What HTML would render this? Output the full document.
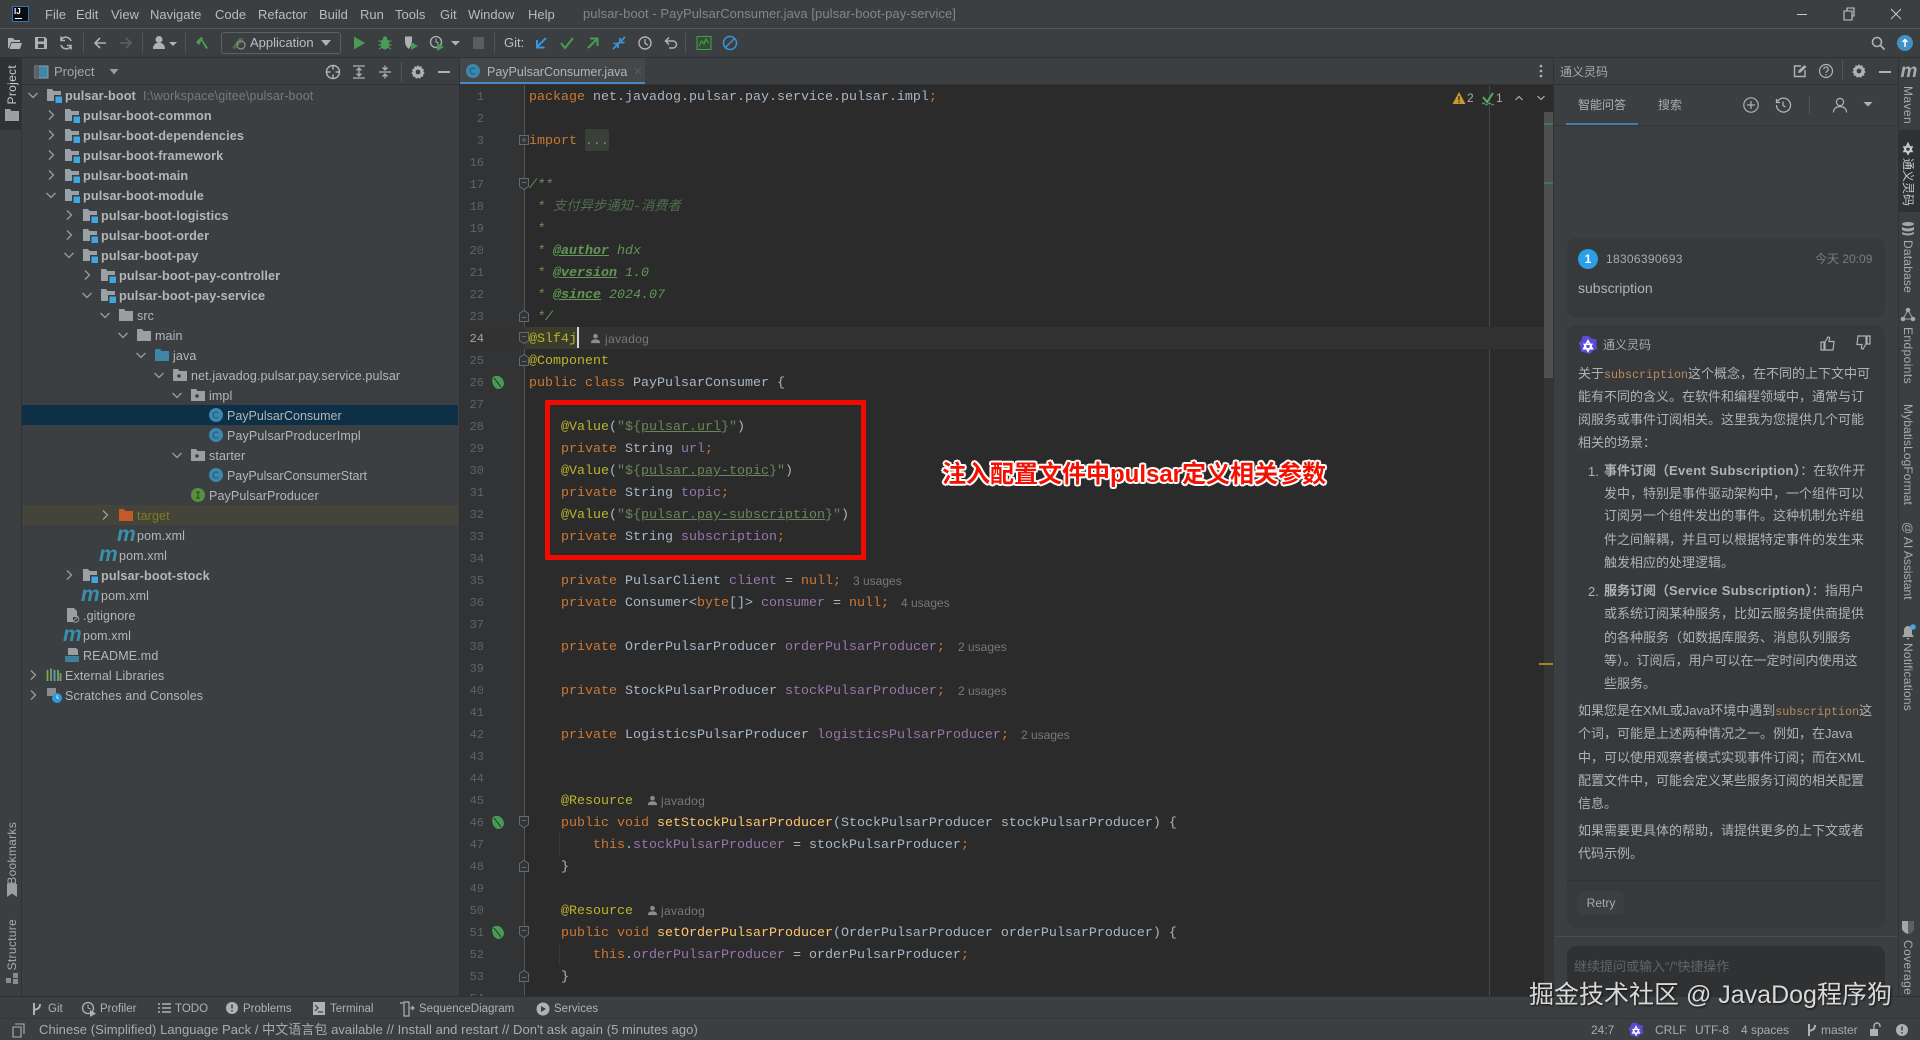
<!DOCTYPE html>
<html lang="zh"><head><meta charset="utf-8"><title>pulsar-boot - PayPulsarConsumer.java</title>
<style>
html,body{margin:0;padding:0;width:1920px;height:1040px;overflow:hidden;background:#3c3f41}
body{position:relative;font-family:"Liberation Sans","Noto Sans CJK SC",sans-serif;color:#b4b6b8;font-size:13px}
div,span.p{position:absolute;white-space:pre}
svg.i{position:absolute;width:16px;height:16px;overflow:visible}
.bl{background:#323232}
.menu{top:5px;line-height:20px;font-size:13px;color:#b9bbbd}
.t{line-height:20px;font-size:12.5px;color:#b4b6b8;letter-spacing:.12px;margin-top:1px}
.t.b{font-weight:bold;font-size:12.7px;letter-spacing:.1px}
.mv{position:absolute;font:italic bold 21px/20px "Liberation Sans",sans-serif;color:#3a8fad;width:18px;text-align:center}
.code{position:absolute;left:529px;top:87px;font:13.33px/22px "Liberation Mono","Noto Sans CJK SC",monospace;color:#a9b7c6;white-space:normal}
.code>div{position:static;height:22px;white-space:pre}
.nums>div{position:static;height:22px}
.nums{position:absolute;left:460px;width:24px;top:86px;text-align:right;font:12px/22px "Liberation Mono",monospace;color:#606366}
.k{color:#cc7832}.a{color:#bbb529}.s{color:#6a8759}.f{color:#9876aa}.m{color:#ffc66d}.d{color:#629755;font-style:italic}.dt{color:#629755;font-style:italic;font-weight:bold;text-decoration:underline}.dc{color:#4f6f4c;font-style:italic}
.u{text-decoration:underline}
.inl{font-size:12px;line-height:22px;color:#787878;margin-top:1px}
.tb{top:999px;line-height:20px;font-size:11.5px;color:#b0b2b4}
.st{top:1020px;line-height:20px;font-size:12px;color:#a9abad}
.ch{font-size:13px;line-height:23px;color:#b0b2b4;left:1578px}
.ch b i{font-style:normal;letter-spacing:.35px}
.vr{writing-mode:vertical-rl;text-orientation:sideways;font-size:12px;line-height:22px;color:#a9abad;left:1897px;width:22px}
.vl{writing-mode:vertical-rl;transform:rotate(180deg);font-size:12px;line-height:22px;color:#a9abad;left:1px;width:22px}
.mono{font-family:"Liberation Mono",monospace;font-size:11.67px;color:#b68d63}
</style></head><body>
<svg width="0" height="0" style="position:absolute">
<defs>
<symbol id="cr" viewBox="0 0 16 16"><path d="M6 3.5l4.5 4.5-4.5 4.5" fill="none" stroke="#9a9d9f" stroke-width="1.3"/></symbol>
<symbol id="cd" viewBox="0 0 16 16"><path d="M3.5 6l4.5 4.5 4.5-4.5" fill="none" stroke="#9a9d9f" stroke-width="1.3"/></symbol>
<symbol id="fm" viewBox="0 0 16 16"><path d="M1 2h5l1.5 2H15v10H1z" fill="#9aa1a6"/><rect x="8" y="8" width="8" height="8" fill="#3c3f41"/><rect x="9.5" y="9.5" width="6.5" height="6.5" fill="#3ea6e0"/></symbol>
<symbol id="fp" viewBox="0 0 16 16"><path d="M1 2h5l1.5 2H15v10H1z" fill="#9b9fa3"/></symbol>
<symbol id="fj" viewBox="0 0 16 16"><path d="M1 2h5l1.5 2H15v10H1z" fill="#3f86a6"/></symbol>
<symbol id="fk" viewBox="0 0 16 16"><path d="M1 2h5l1.5 2H15v10H1z" fill="#9b9fa3"/><circle cx="7" cy="9" r="1.8" fill="#3c3f41"/></symbol>
<symbol id="fx" viewBox="0 0 16 16"><path d="M1 2h5l1.5 2H15v10H1z" fill="#c55a28"/></symbol>
<symbol id="cc" viewBox="0 0 16 16"><circle cx="8" cy="8" r="7" fill="#3b87ad"/><path d="M10.4 6a3 3 0 1 0 0 4" fill="none" stroke="#2a5f7c" stroke-width="1.3"/></symbol>
<symbol id="ci" viewBox="0 0 16 16"><circle cx="8" cy="8" r="7" fill="#5a8f3c"/><path d="M6 5h4M8 5v6M6 11h4" fill="none" stroke="#2f4f22" stroke-width="1.3"/></symbol>
<symbol id="lf" viewBox="0 0 16 16"><path d="M3 3c5-3 10 0 11 6 0 4-3 6-6 6C3 14 1 7 3 3z" fill="#499c54"/><path d="M4 4l7 9" stroke="#2b2b2b" stroke-width="1"/></symbol>
<symbol id="fo" viewBox="0 0 12 16"><path d="M1.5 2.5h9v8l-4.500 3-4.500-3z" fill="#313335" stroke="#666a6d"/><path d="M3.800 6.500h4.400" stroke="#666a6d"/></symbol>
<symbol id="fe" viewBox="0 0 12 16"><path d="M1.500 13.500h9v-8l-4.500-3-4.500 3z" fill="#313335" stroke="#666a6d"/><path d="M3.800 9.500h4.400" stroke="#666a6d"/></symbol>
<symbol id="fa" viewBox="0 0 12 16"><path d="M1.500 3.500h9v9h-9z" fill="#313335" stroke="#666a6d"/><path d="M3.800 8h4.400M6 5.800v4.400" stroke="#666a6d"/></symbol>
<symbol id="pr" viewBox="0 0 12 12"><circle cx="6" cy="3.500" r="2.500" fill="#8a8c8e"/><path d="M1 11c0-3 2-4 5-4s5 1 5 4z" fill="#8a8c8e"/></symbol>
<symbol id="gl" viewBox="0 0 16 16"><path d="M8 .5l3 2.500 4 .5-.5 4 1 3.500-3.500 1.500-2.500 3-3.500-1.500-3.500-.5-.5-4L.5 6.500l2.500-2.500.5-3z" fill="#5b4bd6"/><path d="M4.500 11L8 4.500l3.500 6.500zM8 13L5 7.500h6z" fill="none" stroke="#fff" stroke-width="1.200"/></symbol>
<symbol id="gw" viewBox="0 0 16 16"><path d="M4 11.500L8 3.500l4 8zM8 14L4 7h8z" fill="none" stroke="#c8cacc" stroke-width="1.600"/></symbol>
<symbol id="gear" viewBox="0 0 16 16"><path d="M8 1l1.200 1.800 2.200-.5.500 2.200 2.100.9-.7 2.100 1.500 1.700-1.700 1.200.2 2.200-2.200.2-1.100 1.900-2-1-2 1-1.100-1.900-2.200-.2.200-2.200L1.200 9.200l1.500-1.700L2 5.400l2.100-.9.500-2.200 2.200.5z" fill="#afb1b3"/><circle cx="8" cy="8" r="2.400" fill="#3c3f41"/></symbol>
</defs></svg>

<!-- title / toolbar lines -->
<div style="left:0;top:28px;width:1920px;height:1px;background:#515658"></div>
<div style="left:0;top:57px;width:1920px;height:1px;background:#2f3133"></div>

<!-- logo -->
<div style="left:12px;top:6px;width:14px;height:14px;background:#0c0c0c;border:1px solid #2f74c0;color:#fff;font:bold 8px/9px 'Liberation Sans',sans-serif;text-align:left;padding-left:1px">IJ</div>
<div style="left:15px;top:18px;width:7px;height:1px;background:#fff"></div>

<div class="menu" style="left:45px">File</div><div class="menu" style="left:76px">Edit</div><div class="menu" style="left:111px">View</div><div class="menu" style="left:150px">Navigate</div><div class="menu" style="left:215px">Code</div><div class="menu" style="left:258px">Refactor</div><div class="menu" style="left:319px">Build</div><div class="menu" style="left:360px">Run</div><div class="menu" style="left:395px">Tools</div><div class="menu" style="left:440px">Git</div><div class="menu" style="left:468px">Window</div><div class="menu" style="left:528px">Help</div>
<div class="menu" style="left:583px;top:4px;color:#848688;letter-spacing:.06px">pulsar-boot - PayPulsarConsumer.java [pulsar-boot-pay-service]</div>

<!-- window controls -->
<div style="left:1797px;top:14px;width:10px;height:1px;background:#c5c7c9"></div>
<svg class="i" style="left:1841px;top:6px"><path d="M3 5h8v9H3zM6 5V2h7v8h-2" fill="none" stroke="#c5c7c9" stroke-width="1.100"/></svg>
<svg class="i" style="left:1888px;top:6px"><path d="M3 3l10 10M13 3L3 13" fill="none" stroke="#c5c7c9" stroke-width="1"/></svg>

<!-- toolbar icons -->
<svg class="i" style="left:7px;top:35px"><path d="M1 3h5l1.500 2H13v2H4L2 13H1zM4.500 8H15l-2 6H2.500z" fill="#afb1b3"/></svg>
<svg class="i" style="left:33px;top:35px"><path d="M2 2h10l2 2v10H2z" fill="#afb1b3"/><path d="M5 3h6v3.500H5zM5 9h6v4H5z" fill="#3c3f41"/></svg>
<svg class="i" style="left:58px;top:35px"><path d="M13 6a5.500 5.500 0 0 0-10-1M3 10a5.500 5.500 0 0 0 10 1M3 1.500v4h4M13 14.500v-4H9" fill="none" stroke="#afb1b3" stroke-width="1.600"/></svg>
<div style="left:83px;top:33px;width:1px;height:20px;background:#515658"></div>
<svg class="i" style="left:92px;top:35px"><path d="M14 8H3M8 3L3 8l5 5" fill="none" stroke="#afb1b3" stroke-width="1.600"/></svg>
<svg class="i" style="left:118px;top:35px"><path d="M2 8h11M8 3l5 5-5 5" fill="none" stroke="#5e6163" stroke-width="1.600"/></svg>
<div style="left:142px;top:33px;width:1px;height:20px;background:#515658"></div>
<svg class="i" style="left:151px;top:35px"><circle cx="8" cy="4.500" r="3.500" fill="#afb1b3"/><path d="M2 14c0-4 2-5 3.500-6h5c1.500 1 3.500 2 3.500 6z" fill="#afb1b3"/></svg>
<svg class="i" style="left:165px;top:35px"><path d="M4 7h8l-4 4z" fill="#afb1b3"/></svg>
<div style="left:185px;top:33px;width:1px;height:20px;background:#515658"></div>
<svg class="i" style="left:193px;top:35px"><path d="M3 7L8 2l2 1-4 7zM7 3l2 1 6 9-2 1z" fill="#499c54"/></svg>
<div style="left:221px;top:32px;width:118px;height:20px;border:1px solid #5e6060;border-radius:3px"></div>
<svg class="i" style="left:231px;top:35px"><path d="M1 13L8 3h4v3L4 14z" fill="#4f6b3a"/><circle cx="10" cy="10" r="4" fill="none" stroke="#8b8e90" stroke-width="1.300"/></svg>
<div style="left:250px;top:33px;line-height:20px;font-size:13px;color:#bbbdbf">Application</div>
<svg class="i" style="left:318px;top:35px"><path d="M3 5h10l-5 6z" fill="#afb1b3"/></svg>
<svg class="i" style="left:351px;top:35px"><path d="M3 1.500l11 6.500-11 6.500z" fill="#499c54"/></svg>
<svg class="i" style="left:377px;top:35px"><ellipse cx="8" cy="9" rx="4.200" ry="5.500" fill="#499c54"/><circle cx="8" cy="3.500" r="2.200" fill="#499c54"/><path d="M1.500 6h3M1.500 10h3M11.500 6h3M11.500 10h3M2 14l3-2M14 14l-3-2" stroke="#499c54" stroke-width="1.300"/></svg>
<svg class="i" style="left:403px;top:35px"><path d="M2 1.500h7v7L6 14C3 12 2 9 2 6z" fill="#afb1b3"/><path d="M8 7l7 4-7 4z" fill="#499c54"/></svg>
<svg class="i" style="left:429px;top:35px"><circle cx="7" cy="7" r="5.500" fill="none" stroke="#afb1b3" stroke-width="1.300"/><path d="M7 3.500V7l2.500 1" fill="none" stroke="#afb1b3"/><path d="M8 8l7 4-7 4z" fill="#499c54"/></svg>
<svg class="i" style="left:448px;top:35px"><path d="M3 6h9l-4.500 4.500z" fill="#afb1b3"/></svg>
<div style="left:473px;top:37px;width:11px;height:12px;background:#5a5c5e"></div>
<div style="left:494px;top:33px;width:1px;height:20px;background:#515658"></div>
<div style="left:504px;top:33px;line-height:20px;font-size:13px;color:#bbbdbf">Git:</div>
<svg class="i" style="left:533px;top:35px"><path d="M13 3L4 12M4 5v7.500h7.500" fill="none" stroke="#3a95d8" stroke-width="2"/></svg>
<svg class="i" style="left:559px;top:35px"><path d="M2 8l4 5 8-10" fill="none" stroke="#499c54" stroke-width="2"/></svg>
<svg class="i" style="left:585px;top:35px"><path d="M3 13l9-9M5 3.500h7.500V11" fill="none" stroke="#499c54" stroke-width="2"/></svg>
<svg class="i" style="left:611px;top:35px"><path d="M8 8l6-6M9 3v4.500h4.500M8 8l-6 6M7 13V8.500H2.500" fill="none" stroke="#3a95d8" stroke-width="1.700"/></svg>
<svg class="i" style="left:637px;top:35px"><circle cx="8" cy="8" r="6" fill="none" stroke="#afb1b3" stroke-width="1.400"/><path d="M8 4v4.500l3 1.500" fill="none" stroke="#afb1b3" stroke-width="1.300"/></svg>
<svg class="i" style="left:663px;top:35px"><path d="M3 6h7a3.500 3.500 0 0 1 0 7H6M6 2.500L2.500 6 6 9.500" fill="none" stroke="#afb1b3" stroke-width="1.500"/></svg>
<div style="left:685px;top:33px;width:1px;height:20px;background:#515658"></div>
<svg class="i" style="left:696px;top:35px"><rect x="1" y="1.500" width="14" height="13" fill="#2f4f34" stroke="#499c54"/><path d="M3 11l2.500-5 2.500 3 2-5 2.500 4" fill="none" stroke="#499c54" stroke-width="1.100"/></svg>
<svg class="i" style="left:722px;top:35px"><circle cx="8" cy="8" r="6.500" fill="none" stroke="#3a95d8" stroke-width="1.500"/><path d="M3.500 12.500l9-9" stroke="#3a95d8" stroke-width="1.500"/></svg>
<svg class="i" style="left:1870px;top:35px"><circle cx="7" cy="7" r="4.500" fill="none" stroke="#afb1b3" stroke-width="1.600"/><path d="M10.500 10.500l4 4" stroke="#afb1b3" stroke-width="1.800"/></svg>
<svg class="i" style="left:1897px;top:35px"><circle cx="8" cy="8" r="8" fill="#3f91c6"/><path d="M8 12V5M5.500 7L8 4.500 10.500 7" fill="none" stroke="#fff" stroke-width="1.500"/></svg>

<!-- left strip -->
<div style="left:0;top:58px;width:21px;height:72px;background:#2f3133"></div>
<div style="left:21px;top:58px;width:1px;height:938px;background:#323232"></div>
<div class="vl" style="top:65px;color:#c8cacc;letter-spacing:.3px">Project</div>
<svg class="i" style="left:4px;top:107px"><use href="#fp"/></svg>
<div class="vl" style="top:822px;letter-spacing:.3px">Bookmarks</div>
<svg class="i" style="left:4px;top:883px"><path d="M3 1h10v13l-5-3.500L3 14z" fill="#9b9ea0"/></svg>
<div class="vl" style="top:919px;letter-spacing:.3px">Structure</div>
<svg class="i" style="left:4px;top:970px"><path d="M2 8h5v5H2zM9 3h5v5H9zM9 9h5v5H9z" fill="#8a8c8e"/></svg>

<!-- project header -->
<svg class="i" style="left:34px;top:64px"><rect x="1" y="2" width="13" height="12" fill="#3f87a6" stroke="#9a9d9f"/><rect x="1" y="2" width="4" height="12" fill="#5e6163"/></svg>
<div style="left:54px;top:62px;line-height:20px;font-size:13px;color:#a6a8aa">Project</div>
<svg class="i" style="left:106px;top:64px"><path d="M3.500 5h9L8 10.500z" fill="#9a9d9f"/></svg>
<svg class="i" style="left:325px;top:64px"><circle cx="8" cy="8" r="6.500" fill="none" stroke="#afb1b3" stroke-width="1.500"/><path d="M8 1.500v4M8 10.500v4M1.500 8h4M10.500 8h4" stroke="#afb1b3" stroke-width="1.500"/></svg>
<svg class="i" style="left:351px;top:64px"><path d="M2 2h12M2 14h12M8 5v6M5.500 6.500L8 4l2.500 2.500M5.500 9.500L8 12l2.500-2.500" fill="none" stroke="#afb1b3" stroke-width="1.300"/></svg>
<svg class="i" style="left:377px;top:64px"><path d="M2 8h12M8 1.500v4M5.500 3.500L8 6l2.500-2.500M8 14.500v-4M5.500 12.500L8 10l2.500 2.500" fill="none" stroke="#afb1b3" stroke-width="1.300"/></svg>
<div style="left:401px;top:62px;width:1px;height:20px;background:#515658"></div>
<svg class="i" style="left:410px;top:64px"><use href="#gear"/></svg>
<div style="left:438px;top:71px;width:12px;height:2px;background:#afb1b3"></div>
<div style="left:22px;top:84px;width:437px;height:1px;background:#323232"></div>

<!-- tree selected rows -->
<div style="left:22px;top:405px;width:436px;height:20px;background:#0d2f47"></div>
<div style="left:22px;top:505px;width:436px;height:20px;background:#45443a"></div>

<!-- tree -->
<svg class="i" style="left:25px;top:87px"><use href="#cd"/></svg><svg class="i" style="left:46px;top:87px"><use href="#fm"/></svg><div class="t b" style="left:65px;top:85px">pulsar-boot</div><div class="t" style="left:143px;top:85px;color:#777a7c">I:\workspace\gitee\pulsar-boot</div>
<svg class="i" style="left:43px;top:107px"><use href="#cr"/></svg><svg class="i" style="left:64px;top:107px"><use href="#fm"/></svg><div class="t b" style="left:83px;top:105px">pulsar-boot-common</div>
<svg class="i" style="left:43px;top:127px"><use href="#cr"/></svg><svg class="i" style="left:64px;top:127px"><use href="#fm"/></svg><div class="t b" style="left:83px;top:125px">pulsar-boot-dependencies</div>
<svg class="i" style="left:43px;top:147px"><use href="#cr"/></svg><svg class="i" style="left:64px;top:147px"><use href="#fm"/></svg><div class="t b" style="left:83px;top:145px">pulsar-boot-framework</div>
<svg class="i" style="left:43px;top:167px"><use href="#cr"/></svg><svg class="i" style="left:64px;top:167px"><use href="#fm"/></svg><div class="t b" style="left:83px;top:165px">pulsar-boot-main</div>
<svg class="i" style="left:43px;top:187px"><use href="#cd"/></svg><svg class="i" style="left:64px;top:187px"><use href="#fm"/></svg><div class="t b" style="left:83px;top:185px">pulsar-boot-module</div>
<svg class="i" style="left:61px;top:207px"><use href="#cr"/></svg><svg class="i" style="left:82px;top:207px"><use href="#fm"/></svg><div class="t b" style="left:101px;top:205px">pulsar-boot-logistics</div>
<svg class="i" style="left:61px;top:227px"><use href="#cr"/></svg><svg class="i" style="left:82px;top:227px"><use href="#fm"/></svg><div class="t b" style="left:101px;top:225px">pulsar-boot-order</div>
<svg class="i" style="left:61px;top:247px"><use href="#cd"/></svg><svg class="i" style="left:82px;top:247px"><use href="#fm"/></svg><div class="t b" style="left:101px;top:245px">pulsar-boot-pay</div>
<svg class="i" style="left:79px;top:267px"><use href="#cr"/></svg><svg class="i" style="left:100px;top:267px"><use href="#fm"/></svg><div class="t b" style="left:119px;top:265px">pulsar-boot-pay-controller</div>
<svg class="i" style="left:79px;top:287px"><use href="#cd"/></svg><svg class="i" style="left:100px;top:287px"><use href="#fm"/></svg><div class="t b" style="left:119px;top:285px">pulsar-boot-pay-service</div>
<svg class="i" style="left:97px;top:307px"><use href="#cd"/></svg><svg class="i" style="left:118px;top:307px"><use href="#fp"/></svg><div class="t" style="left:137px;top:305px">src</div>
<svg class="i" style="left:115px;top:327px"><use href="#cd"/></svg><svg class="i" style="left:136px;top:327px"><use href="#fp"/></svg><div class="t" style="left:155px;top:325px">main</div>
<svg class="i" style="left:133px;top:347px"><use href="#cd"/></svg><svg class="i" style="left:154px;top:347px"><use href="#fj"/></svg><div class="t" style="left:173px;top:345px">java</div>
<svg class="i" style="left:151px;top:367px"><use href="#cd"/></svg><svg class="i" style="left:172px;top:367px"><use href="#fk"/></svg><div class="t" style="left:191px;top:365px">net.javadog.pulsar.pay.service.pulsar</div>
<svg class="i" style="left:169px;top:387px"><use href="#cd"/></svg><svg class="i" style="left:190px;top:387px"><use href="#fk"/></svg><div class="t" style="left:209px;top:385px">impl</div>
<svg class="i" style="left:208px;top:407px"><use href="#cc"/></svg><div class="t" style="left:227px;top:405px;letter-spacing:0">PayPulsarConsumer</div>
<svg class="i" style="left:208px;top:427px"><use href="#cc"/></svg><div class="t" style="left:227px;top:425px">PayPulsarProducerImpl</div>
<svg class="i" style="left:169px;top:447px"><use href="#cd"/></svg><svg class="i" style="left:190px;top:447px"><use href="#fk"/></svg><div class="t" style="left:209px;top:445px">starter</div>
<svg class="i" style="left:208px;top:467px"><use href="#cc"/></svg><div class="t" style="left:227px;top:465px;letter-spacing:-.05px">PayPulsarConsumerStart</div>
<svg class="i" style="left:190px;top:487px"><use href="#ci"/></svg><div class="t" style="left:209px;top:485px">PayPulsarProducer</div>
<svg class="i" style="left:97px;top:507px"><use href="#cr"/></svg><svg class="i" style="left:118px;top:507px"><use href="#fx"/></svg><div class="t" style="left:137px;top:505px;color:#7f7d1e">target</div>
<span class="mv" style="left:117px;top:525px">m</span><div class="t" style="left:137px;top:525px">pom.xml</div>
<span class="mv" style="left:99px;top:545px">m</span><div class="t" style="left:119px;top:545px">pom.xml</div>
<svg class="i" style="left:61px;top:567px"><use href="#cr"/></svg><svg class="i" style="left:82px;top:567px"><use href="#fm"/></svg><div class="t b" style="left:101px;top:565px">pulsar-boot-stock</div>
<span class="mv" style="left:81px;top:585px">m</span><div class="t" style="left:101px;top:585px">pom.xml</div>
<svg class="i" style="left:64px;top:607px"><path d="M4 1h6l3 3v6H9v5H3V1z" fill="#9b9ea0"/><circle cx="11.500" cy="12" r="3.300" fill="none" stroke="#9b9ea0"/><path d="M9.500 14l4-4" stroke="#9b9ea0"/></svg><div class="t" style="left:83px;top:605px">.gitignore</div>
<span class="mv" style="left:63px;top:625px">m</span><div class="t" style="left:83px;top:625px">pom.xml</div>
<svg class="i" style="left:64px;top:647px"><path d="M4 1h8l2 2v5H4z" fill="#9b9ea0"/><rect x="1" y="9" width="14" height="6" fill="#3f7f9c"/></svg><div class="t" style="left:83px;top:645px">README.md</div>
<svg class="i" style="left:25px;top:667px"><use href="#cr"/></svg><svg class="i" style="left:46px;top:667px"><path d="M1.500 3v11M5 1.500V14M8.500 3v11M12 3v11M14.500 6v8" stroke="#7aa35d" stroke-width="1.800"/><path d="M8.500 3v11" stroke="#4e9bc3" stroke-width="1.800"/></svg><div class="t" style="left:65px;top:665px">External Libraries</div>
<svg class="i" style="left:25px;top:687px"><use href="#cr"/></svg><svg class="i" style="left:46px;top:687px"><path d="M1 1h9v8H1z" fill="#8a8c8e"/><circle cx="11" cy="11" r="5" fill="#2f9ad8"/><path d="M11 8v3h2" fill="none" stroke="#dfe3e6"/></svg><div class="t" style="left:65px;top:685px">Scratches and Consoles</div>

<!-- tab row -->
<div style="left:459px;top:58px;width:1px;height:938px;background:#323232"></div>
<div style="left:460px;top:58px;width:185px;height:24px;background:#4a4d4f;opacity:.55"></div>
<div style="left:460px;top:82px;width:185px;height:3px;background:#4a88c7"></div>
<svg class="i" style="left:465px;top:63px"><use href="#cc"/></svg>
<div style="left:487px;top:62px;line-height:20px;font-size:12.5px;color:#b2b4b6">PayPulsarConsumer.java</div>
<svg class="i" style="left:630px;top:63px"><path d="M5 5l6 6M11 5l-6 6" stroke="#5a5d5f" stroke-width="1"/></svg>
<svg class="i" style="left:1533px;top:63px"><circle cx="8" cy="3" r="1.300" fill="#afb1b3"/><circle cx="8" cy="8" r="1.300" fill="#afb1b3"/><circle cx="8" cy="13" r="1.300" fill="#afb1b3"/></svg>
<div style="left:460px;top:84px;width:1093px;height:1px;background:#323232"></div>

<!-- editor -->
<div style="left:460px;top:85px;width:64px;height:911px;background:#313335"></div>
<div style="left:524px;top:85px;width:1029px;height:911px;background:#2b2b2b"></div>
<div style="left:524px;top:85px;width:1px;height:911px;background:#555"></div>
<div style="left:1489px;top:85px;width:1px;height:911px;background:#45474a"></div>
<div class="bl" style="left:460px;top:327px;width:1093px;height:22px"></div>
<div style="left:525px;top:327px;width:52px;height:22px;background:#3a3d2e"></div>
<div style="left:577px;top:327px;width:2px;height:21px;background:#d5d5d5"></div>
<div style="left:585px;top:129px;width:24px;height:22px;background:#3a3f3a;border-radius:2px"></div>
<div style="left:559px;top:833px;width:1px;height:22px;background:#3a3a3a"></div>
<div style="left:559px;top:943px;width:1px;height:22px;background:#3a3a3a"></div>

<!-- line numbers -->
<div class="nums"><div>1</div><div>2</div><div>3</div><div>16</div><div>17</div><div>18</div><div>19</div><div>20</div><div>21</div><div>22</div><div>23</div><div style="color:#a4a3a3">24</div><div>25</div><div>26</div><div>27</div><div>28</div><div>29</div><div>30</div><div>31</div><div>32</div><div>33</div><div>34</div><div>35</div><div>36</div><div>37</div><div>38</div><div>39</div><div>40</div><div>41</div><div>42</div><div>43</div><div>44</div><div>45</div><div>46</div><div>47</div><div>48</div><div>49</div><div>50</div><div>51</div><div>52</div><div>53</div><div>54</div></div>

<!-- gutter icons -->
<svg class="i" style="left:490px;top:374px"><use href="#lf"/></svg>
<svg class="i" style="left:490px;top:814px"><use href="#lf"/></svg>
<svg class="i" style="left:490px;top:924px"><use href="#lf"/></svg>
<svg class="i" style="left:518px;top:132px;width:12px"><use href="#fa"/></svg>
<svg class="i" style="left:518px;top:176px;width:12px"><use href="#fo"/></svg>
<svg class="i" style="left:518px;top:308px;width:12px"><use href="#fe"/></svg>
<svg class="i" style="left:518px;top:330px;width:12px"><use href="#fo"/></svg>
<svg class="i" style="left:518px;top:352px;width:12px"><use href="#fe"/></svg>
<svg class="i" style="left:518px;top:814px;width:12px"><use href="#fo"/></svg>
<svg class="i" style="left:518px;top:858px;width:12px"><use href="#fe"/></svg>
<svg class="i" style="left:518px;top:924px;width:12px"><use href="#fo"/></svg>
<svg class="i" style="left:518px;top:968px;width:12px"><use href="#fe"/></svg>

<!-- code -->
<div class="code"><div><span class="k">package</span> net.javadog.pulsar.pay.service.pulsar.impl<span class="k">;</span></div><div></div><div><span class="k">import</span> <span class="d" style="font-style:normal">...</span></div><div></div><div><span class="d">/**</span></div><div><span class="d"> * </span><span class="dc">支付异步通知-消费者</span></div><div><span class="d"> *</span></div><div><span class="d"> * </span><span class="dt">@author</span><span class="d"> hdx</span></div><div><span class="d"> * </span><span class="dt">@version</span><span class="d"> 1.0</span></div><div><span class="d"> * </span><span class="dt">@since</span><span class="d"> 2024.07</span></div><div><span class="d"> */</span></div><div><span class="a">@Slf4j</span></div><div><span class="a">@Component</span></div><div><span class="k">public class</span> PayPulsarConsumer {</div><div></div><div>    <span class="a">@Value</span>(<span class="s">"${<span class="u">pulsar.url</span>}"</span>)</div><div>    <span class="k">private</span> String <span class="f">url</span><span class="k">;</span></div><div>    <span class="a">@Value</span>(<span class="s">"${<span class="u">pulsar.pay-topic</span>}"</span>)</div><div>    <span class="k">private</span> String <span class="f">topic</span><span class="k">;</span></div><div>    <span class="a">@Value</span>(<span class="s">"${<span class="u">pulsar.pay-subscription</span>}"</span>)</div><div>    <span class="k">private</span> String <span class="f">subscription</span><span class="k">;</span></div><div></div><div>    <span class="k">private</span> PulsarClient <span class="f">client</span> = <span class="k">null;</span></div><div>    <span class="k">private</span> Consumer&lt;<span class="k">byte</span>[]&gt; <span class="f">consumer</span> = <span class="k">null;</span></div><div></div><div>    <span class="k">private</span> OrderPulsarProducer <span class="f">orderPulsarProducer</span><span class="k">;</span></div><div></div><div>    <span class="k">private</span> StockPulsarProducer <span class="f">stockPulsarProducer</span><span class="k">;</span></div><div></div><div>    <span class="k">private</span> LogisticsPulsarProducer <span class="f">logisticsPulsarProducer</span><span class="k">;</span></div><div></div><div></div><div>    <span class="a">@Resource</span></div><div>    <span class="k">public void</span> <span class="m">setStockPulsarProducer</span>(StockPulsarProducer stockPulsarProducer) {</div><div>        <span class="k">this</span>.<span class="f">stockPulsarProducer</span> = stockPulsarProducer<span class="k">;</span></div><div>    }</div><div></div><div>    <span class="a">@Resource</span></div><div>    <span class="k">public void</span> <span class="m">setOrderPulsarProducer</span>(OrderPulsarProducer orderPulsarProducer) {</div><div>        <span class="k">this</span>.<span class="f">orderPulsarProducer</span> = orderPulsarProducer<span class="k">;</span></div><div>    }</div></div>

<!-- inlay hints -->
<svg class="i" style="left:590px;top:333px;width:11px;height:11px"><use href="#pr"/></svg><div class="inl" style="left:605px;top:327px;letter-spacing:.3px">javadog</div>
<svg class="i" style="left:647px;top:795px;width:11px;height:11px"><use href="#pr"/></svg><div class="inl" style="left:661px;top:789px;letter-spacing:.3px">javadog</div>
<svg class="i" style="left:647px;top:905px;width:11px;height:11px"><use href="#pr"/></svg><div class="inl" style="left:661px;top:899px;letter-spacing:.3px">javadog</div>
<div class="inl" style="left:853px;top:569px">3 usages</div>
<div class="inl" style="left:901px;top:591px">4 usages</div>
<div class="inl" style="left:958px;top:635px">2 usages</div>
<div class="inl" style="left:958px;top:679px">2 usages</div>
<div class="inl" style="left:1021px;top:723px">2 usages</div>

<!-- red annotations -->
<div style="left:545px;top:400px;width:311px;height:150px;border:5px solid #f10a00"></div>
<div style="left:942px;top:459px;line-height:32px;font-size:24px;font-weight:bold;color:#f40f00;font-family:'Liberation Sans','Noto Sans CJK SC',sans-serif;text-shadow:2px 0 0 #fff,-2px 0 0 #fff,0 2px 0 #fff,0 -2px 0 #fff,1.500px 1.500px 0 #fff,-1.500px 1.500px 0 #fff,1.500px -1.500px 0 #fff,-1.500px -1.500px 0 #fff">注入配置文件中pulsar定义相关参数</div>

<!-- inspections -->
<svg class="i" style="left:1451px;top:90px"><path d="M8 2l6.500 12h-13z" fill="#c99a2e"/><path d="M8 6v4.500M8 11.500v1.500" stroke="#2b2b2b" stroke-width="1.300"/></svg>
<div style="left:1467px;top:88px;line-height:20px;font-size:12px;color:#a9abad">2</div>
<svg class="i" style="left:1480px;top:90px"><path d="M3 7l4 5 6-9" fill="none" stroke="#59a869" stroke-width="2"/><path d="M2 14q1.500-2 3 0t3 0 3 0 3 0" fill="none" stroke="#59a869"/></svg>
<div style="left:1496px;top:88px;line-height:20px;font-size:12px;color:#a9abad">1</div>
<svg class="i" style="left:1511px;top:90px"><path d="M4.500 10L8 6.500 11.500 10" fill="none" stroke="#a9abad" stroke-width="1.200"/></svg>
<svg class="i" style="left:1533px;top:90px"><path d="M4.500 6L8 9.500 11.500 6" fill="none" stroke="#a9abad" stroke-width="1.200"/></svg>

<!-- scrollbar -->
<div style="left:1544px;top:112px;width:9px;height:266px;background:#4e5052"></div>
<div style="left:1544px;top:378px;width:9px;height:618px;background:#333537"></div>
<div style="left:1544px;top:123px;width:9px;height:2px;background:#3d7a4d"></div>
<div style="left:1544px;top:182px;width:9px;height:2px;background:#3d7a4d"></div>
<div style="left:1539px;top:663px;width:14px;height:2px;background:#a8821f"></div>

<!-- right panel -->
<div style="left:1553px;top:58px;width:1px;height:938px;background:#323232"></div>
<div style="left:1554px;top:84px;width:344px;height:1px;background:#323232"></div>
<div style="left:1560px;top:62px;line-height:20px;font-size:12px;color:#a6a8aa">通义灵码</div>
<svg class="i" style="left:1792px;top:63px"><path d="M13 7v6.500H2.500V3H9" fill="none" stroke="#afb1b3" stroke-width="1.400"/><path d="M6 10l.5-2.500L12.500 2l2 2-6 5.500z" fill="#afb1b3"/></svg>
<svg class="i" style="left:1818px;top:63px"><circle cx="8" cy="8" r="6.500" fill="none" stroke="#afb1b3" stroke-width="1.200"/><path d="M5.800 6.200a2.200 2.200 0 1 1 3.300 1.900c-.8.500-1.100.9-1.100 1.900M8 11.200v1.300" fill="none" stroke="#afb1b3" stroke-width="1.200"/></svg>
<div style="left:1842px;top:60px;width:1px;height:20px;background:#515658"></div>
<svg class="i" style="left:1851px;top:63px"><use href="#gear"/></svg>
<div style="left:1879px;top:71px;width:12px;height:2px;background:#afb1b3"></div>

<div style="left:1578px;top:95px;line-height:20px;font-size:12px;color:#b0b2b4">智能问答</div>
<div style="left:1658px;top:95px;line-height:20px;font-size:12px;color:#a6a8aa">搜索</div>
<div style="left:1566px;top:123px;width:72px;height:2px;background:#4a7ba8"></div>
<div style="left:1554px;top:125px;width:344px;height:1px;background:#323436"></div>
<svg class="i" style="left:1743px;top:97px"><circle cx="8" cy="8" r="7.200" fill="none" stroke="#afb1b3" stroke-width="1.200"/><path d="M8 4v8M4 8h8" stroke="#afb1b3" stroke-width="1.200"/></svg>
<svg class="i" style="left:1775px;top:97px"><path d="M2.500 4.500A7 7 0 1 1 1.500 8M1.500 2v3.500H5M8 4.500V8.500l2.500 1.500" fill="none" stroke="#afb1b3" stroke-width="1.300"/></svg>
<div style="left:1809px;top:96px;width:1px;height:18px;background:#515658"></div>
<svg class="i" style="left:1832px;top:97px"><circle cx="8" cy="5" r="3.600" fill="none" stroke="#afb1b3" stroke-width="1.200"/><path d="M1.500 15.500c0-4 3-6 6.500-6s6.500 2 6.500 6" fill="none" stroke="#afb1b3" stroke-width="1.200"/></svg>
<svg class="i" style="left:1860px;top:96px"><path d="M3.500 6h9L8 10.500z" fill="#afb1b3"/></svg>

<!-- user card -->
<div style="left:1567px;top:238px;width:318px;height:79px;background:#37393b;border-radius:9px"></div>
<svg class="i" style="left:1578px;top:249px;width:20px;height:20px"><circle cx="10" cy="10" r="10" fill="#2a9ee8"/></svg>
<div style="left:1578px;top:249px;width:20px;line-height:20px;text-align:center;color:#fff;font-weight:bold;font-size:12px">1</div>
<div style="left:1606px;top:249px;line-height:20px;font-size:12px;color:#a9abad;letter-spacing:.3px">18306390693</div>
<div style="left:1815px;top:249px;line-height:20px;font-size:12px;color:#7a7d7f">今天 20:09</div>
<div style="left:1578px;top:278px;line-height:20px;font-size:14px;color:#b0b2b4">subscription</div>

<!-- AI card -->
<div style="left:1567px;top:325px;width:318px;height:603px;background:#37393b;border-radius:9px"></div>
<div style="left:1567px;top:880px;width:318px;height:1px;background:#323436"></div>
<svg class="i" style="left:1578px;top:335px;width:20px;height:20px"><use href="#gl"/></svg>
<div style="left:1603px;top:335px;line-height:20px;font-size:12px;color:#a6a8aa">通义灵码</div>
<svg class="i" style="left:1820px;top:335px"><path d="M1 7h3v8H1zM5 7l3-5c1.500 0 2 1 1.500 2L9 6.500h5l-1 8.500H5z" fill="none" stroke="#afb1b3" stroke-width="1.200"/></svg>
<svg class="i" style="left:1855px;top:335px"><path d="M15 9h-3V1h3zM11 9l-3 5c-1.500 0-2-1-1.500-2L7 9.500H2l1-8.500h8z" fill="none" stroke="#afb1b3" stroke-width="1.200"/></svg>

<div class="ch" style="top:362px">关于<span class="mono">subscription</span>这个概念，在不同的上下文中可</div>
<div class="ch" style="top:385px">能有不同的含义。在软件和编程领域中，通常与订</div>
<div class="ch" style="top:408px">阅服务或事件订阅相关。这里我为您提供几个可能</div>
<div class="ch" style="top:431px">相关的场景：</div>

<div class="ch" style="left:1588px;top:460px">1.</div>
<div class="ch" style="left:1604px;top:459px"><b>事件订阅（<i>Event Subscription</i>）</b>：在软件开</div>
<div class="ch" style="left:1604px;top:482px">发中，特别是事件驱动架构中，一个组件可以</div>
<div class="ch" style="left:1604px;top:504px">订阅另一个组件发出的事件。这种机制允许组</div>
<div class="ch" style="left:1604px;top:528px">件之间解耦，并且可以根据特定事件的发生来</div>
<div class="ch" style="left:1604px;top:551px">触发相应的处理逻辑。</div>

<div class="ch" style="left:1588px;top:580px">2.</div>
<div class="ch" style="left:1604px;top:579px"><b>服务订阅（<i>Service Subscription</i>）</b>：指用户</div>
<div class="ch" style="left:1604px;top:602px">或系统订阅某种服务，比如云服务提供商提供</div>
<div class="ch" style="left:1604px;top:626px">的各种服务（如数据库服务、消息队列服务</div>
<div class="ch" style="left:1604px;top:649px">等）。订阅后，用户可以在一定时间内使用这</div>
<div class="ch" style="left:1604px;top:672px">些服务。</div>

<div class="ch" style="top:699px">如果您是在XML或Java环境中遇到<span class="mono">subscription</span>这</div>
<div class="ch" style="top:722px">个词，可能是上述两种情况之一。例如，在Java</div>
<div class="ch" style="top:746px">中，可以使用观察者模式实现事件订阅；而在XML</div>
<div class="ch" style="top:769px">配置文件中，可能会定义某些服务订阅的相关配置</div>
<div class="ch" style="top:792px">信息。</div>
<div class="ch" style="top:819px">如果需要更具体的帮助，请提供更多的上下文或者</div>
<div class="ch" style="top:842px">代码示例。</div>

<div style="left:1578px;top:891px;width:46px;height:24px;background:#3c3e40;border-radius:5px"></div>
<div style="left:1578px;top:891px;width:46px;height:24px;line-height:24px;text-align:center;font-size:12px;color:#a9abad">Retry</div>

<div style="left:1554px;top:936px;width:344px;height:1px;background:#4a4d4f"></div>
<div style="left:1567px;top:946px;width:318px;height:50px;background:#2f3133;border-radius:9px 9px 0 0"></div>
<div style="left:1574px;top:956px;line-height:22px;font-size:13px;color:#626466">继续提问或输入“/”快捷操作</div>

<!-- right strip -->
<div style="left:1898px;top:58px;width:1px;height:938px;background:#323232"></div>
<div style="left:1899px;top:130px;width:21px;height:82px;background:#2f3133"></div>
<span class="mv" style="left:1900px;top:62px;font-size:19px;color:#a8aaac">m</span>
<div class="vr" style="top:86px;letter-spacing:.4px">Maven</div>
<svg class="i" style="left:1900px;top:140px"><use href="#gw"/></svg>
<div class="vr" style="top:158px;color:#c8cacc">通义灵码</div>
<svg class="i" style="left:1900px;top:221px"><ellipse cx="8" cy="3" rx="6" ry="2" fill="#a4a6a8"/><path d="M2 6q6 3 12 0v3q-6 3-12 0zM2 11q6 3 12 0v2q-6 3-12 0z" fill="#a4a6a8"/></svg>
<div class="vr" style="top:240px;letter-spacing:.2px">Database</div>
<svg class="i" style="left:1900px;top:307px"><path d="M8 3L3 12M8 3l5 9M3 12h10" stroke="#a4a6a8" fill="none"/><circle cx="8" cy="3" r="2.300" fill="#a4a6a8"/><circle cx="3" cy="12" r="2.300" fill="#a4a6a8"/><circle cx="13" cy="12" r="2.300" fill="#a4a6a8"/></svg>
<div class="vr" style="top:327px;letter-spacing:.4px">Endpoints</div>
<div class="vr" style="top:404px;letter-spacing:.1px">MybatisLogFormat</div>
<div class="vr" style="top:522px">@ AI Assistant</div>
<svg class="i" style="left:1900px;top:624px"><path d="M8 2a4 4 0 0 1 4 4v4l2 3H2l2-3V6a4 4 0 0 1 4-4zM6.500 14h3L8 16z" fill="#a4a6a8"/><circle cx="13" cy="3" r="2.800" fill="#3ea6e0"/></svg>
<div class="vr" style="top:643px;letter-spacing:.2px">Notifications</div>
<svg class="i" style="left:1900px;top:919px"><path d="M2 2h12v7c0 3-3 5-6 6-3-1-6-3-6-6z" fill="#a4a6a8"/><path d="M8 2h6v7c0 3-3 5-6 6z" fill="#5d6062"/></svg>
<div class="vr" style="top:940px;letter-spacing:.4px">Coverage</div>

<!-- bottom toolbar -->
<div style="left:0;top:996px;width:1920px;height:44px;background:#3c3f41"></div>
<div style="left:0;top:996px;width:1920px;height:1px;background:#2f3133"></div>
<div style="left:0;top:1018px;width:1920px;height:1px;background:#35383a"></div>
<svg class="i" style="left:29px;top:1001px"><path d="M5 2v12M5 9c4-1 6-2 6-6" fill="none" stroke="#afb1b3" stroke-width="2"/></svg><div class="tb" style="left:48px">Git</div>
<svg class="i" style="left:81px;top:1001px"><circle cx="7" cy="7" r="5.500" fill="none" stroke="#afb1b3" stroke-width="1.300"/><path d="M7 3.500V7l2.500 1" fill="none" stroke="#afb1b3"/><path d="M9 9l6 3.500L9 16z" fill="#afb1b3"/></svg><div class="tb" style="left:100px">Profiler</div>
<svg class="i" style="left:156px;top:1001px"><path d="M2 3h2M6 3h9M2 7h2M6 7h9M2 11h2M6 11h9" stroke="#afb1b3" stroke-width="1.500"/></svg><div class="tb" style="left:175px">TODO</div>
<svg class="i" style="left:224px;top:1001px"><circle cx="8" cy="7" r="6" fill="#afb1b3"/><path d="M8 3.500v4M8 9v1.500" stroke="#3c3f41" stroke-width="1.500"/></svg><div class="tb" style="left:243px">Problems</div>
<svg class="i" style="left:311px;top:1001px"><rect x="2" y="1" width="12" height="13" fill="#afb1b3"/><path d="M4 4l3 3-3 3M7 11h5" fill="none" stroke="#3c3f41" stroke-width="1.200"/></svg><div class="tb" style="left:330px">Terminal</div>
<svg class="i" style="left:399px;top:1001px"><path d="M5 1h5v14H5zM11 7h4M13 5l2 2-2 2M1 2h3" fill="none" stroke="#afb1b3" stroke-width="1.200"/></svg><div class="tb" style="left:419px">SequenceDiagram</div>
<svg class="i" style="left:535px;top:1001px"><circle cx="8" cy="8" r="6.500" fill="#afb1b3"/><path d="M6 5l5 3-5 3z" fill="#3c3f41"/></svg><div class="tb" style="left:554px">Services</div>

<!-- status bar -->
<svg class="i" style="left:10px;top:1022px"><path d="M5 2h9v10M3 5h8v10H3z" fill="none" stroke="#afb1b3" stroke-width="1.100"/></svg>
<div class="st" style="left:39px;font-size:13px;letter-spacing:.055px">Chinese (Simplified) Language Pack / 中文语言包 available // Install and restart // Don't ask again (5 minutes ago)</div>
<div class="st" style="left:1591px">24:7</div>
<svg class="i" style="left:1628px;top:1022px"><use href="#gl"/></svg>
<div class="st" style="left:1655px">CRLF</div>
<div class="st" style="left:1695px">UTF-8</div>
<div class="st" style="left:1741px">4 spaces</div>
<svg class="i" style="left:1804px;top:1022px"><path d="M5 2v12M5 9c4-1 6-2 6-6" fill="none" stroke="#afb1b3" stroke-width="2"/></svg>
<div class="st" style="left:1821px">master</div>
<svg class="i" style="left:1869px;top:1022px"><rect x="1" y="7" width="8" height="7" fill="#afb1b3"/><path d="M5 7V4a3 3 0 0 1 6 0v1" fill="none" stroke="#afb1b3" stroke-width="1.400"/></svg>
<svg class="i" style="left:1894px;top:1022px"><circle cx="8" cy="8" r="6" fill="#afb1b3"/><path d="M8 4.500v4M8 10v1.500" stroke="#3c3f41" stroke-width="1.500"/></svg>

<!-- watermark -->
<div style="left:1529px;top:978px;line-height:34px;font-size:25px;color:#d9d9d9;text-shadow:1px 1px 2px #111">掘金技术社区 @ JavaDog程序狗</div>
</body></html>
